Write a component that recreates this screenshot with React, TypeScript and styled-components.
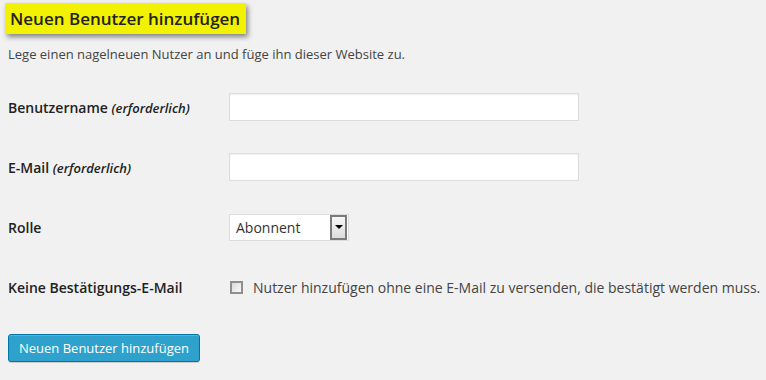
import React from "react";
import styled, { createGlobalStyle } from "styled-components";

const Global = createGlobalStyle`
  html, body { margin: 0; padding: 0; background: #f1f1f1; }
  body { font-family: "Open Sans", "Noto Sans", sans-serif; color: #444; }
  * { box-sizing: border-box; }
`;

const Page = styled.div`
  width: 766px;
  height: 380px;
  padding: 3px 8px 0 8px;
  background: #f1f1f1;
`;

const TitleBox = styled.h2`
  display: inline-block;
  margin: 0 0 0 -3px;
  padding: 0 6px 0 5px;
  height: 31px;
  line-height: 31px;
  background: #f2f200;
  box-shadow: 2px 3px 5px rgba(0, 0, 0, 0.45);
  font-size: 17px;
  font-weight: 600;
  color: #222;
`;

const Intro = styled.p`
  margin: 10px 0 0 0;
  font-size: 13px;
  line-height: 20px;
  color: #444;
`;

const Form = styled.div`
  margin-top: 13px;
  display: grid;
  grid-template-columns: 221px 1fr;
  grid-auto-rows: 60px;
  align-items: center;
`;

const Label = styled.div`
  font-size: 14px;
  font-weight: 600;
  color: #222;
  white-space: nowrap;
`;

const Req = styled.em`
  font-size: 13px;
  font-weight: 600;
  font-style: italic;
`;

const TextInput = styled.input`
  width: 350px;
  height: 28px;
  border: 1px solid #ddd;
  box-shadow: inset 0 1px 2px rgba(0, 0, 0, 0.07);
  background: #fff;
  margin: 0;
  padding: 3px 5px;
  font-family: inherit;
  font-size: 14px;
  outline: none;
`;

const Select = styled.div`
  width: 120px;
  height: 27px;
  border: 1px solid #ddd;
  background: #fff;
  display: flex;
  align-items: center;
  justify-content: space-between;
  padding: 0 1px 0 6px;
  font-size: 14px;
  color: #333;
`;

const ArrowBtn = styled.div`
  width: 17px;
  height: 25px;
  border: 2px solid #7a7a7a;
  background: linear-gradient(#f7f7f7, #dcdcdc);
  display: flex;
  align-items: center;
  justify-content: center;
`;

const Arrow = styled.div`
  width: 0;
  height: 0;
  border-left: 4px solid transparent;
  border-right: 4px solid transparent;
  border-top: 4px solid #000;
`;

const CheckRow = styled.label`
  display: flex;
  align-items: center;
  gap: 10px;
  font-size: 14px;
  color: #444;
  padding-left: 1px;
  white-space: nowrap;
`;

const Box = styled.span`
  width: 13px;
  height: 13px;
  border: 2px solid #8f8f8f;
  background: linear-gradient(135deg, #d8d8d8, #fbfbfb);
  display: inline-block;
  flex: none;
`;

const Button = styled.button`
  margin-top: 17px;
  width: 192px;
  height: 28px;
  background: #2ea2cc;
  border: 1px solid #0074a2;
  border-radius: 3px;
  box-shadow: inset 0 1px 0 rgba(120, 200, 230, 0.5), 0 1px 0 rgba(0, 0, 0, 0.15);
  color: #fff;
  font-family: inherit;
  font-size: 13px;
  padding: 0;
  cursor: pointer;
`;

export default function App() {
  return (
    <>
      <Global />
      <Page>
        <TitleBox>Neuen Benutzer hinzufügen</TitleBox>
        <Intro>Lege einen nagelneuen Nutzer an und füge ihn dieser Website zu.</Intro>
        <Form>
          <Label>
            Benutzername <Req>(erforderlich)</Req>
          </Label>
          <div>
            <TextInput type="text" />
          </div>
          <Label>
            E-Mail <Req>(erforderlich)</Req>
          </Label>
          <div>
            <TextInput type="text" />
          </div>
          <Label>Rolle</Label>
          <div>
            <Select>
              <span>Abonnent</span>
              <ArrowBtn>
                <Arrow />
              </ArrowBtn>
            </Select>
          </div>
          <Label>Keine Bestätigungs-E-Mail</Label>
          <CheckRow>
            <Box />
            Nutzer hinzufügen ohne eine E-Mail zu versenden, die bestätigt werden muss.
          </CheckRow>
        </Form>
        <Button>Neuen Benutzer hinzufügen</Button>
      </Page>
    </>
  );
}
